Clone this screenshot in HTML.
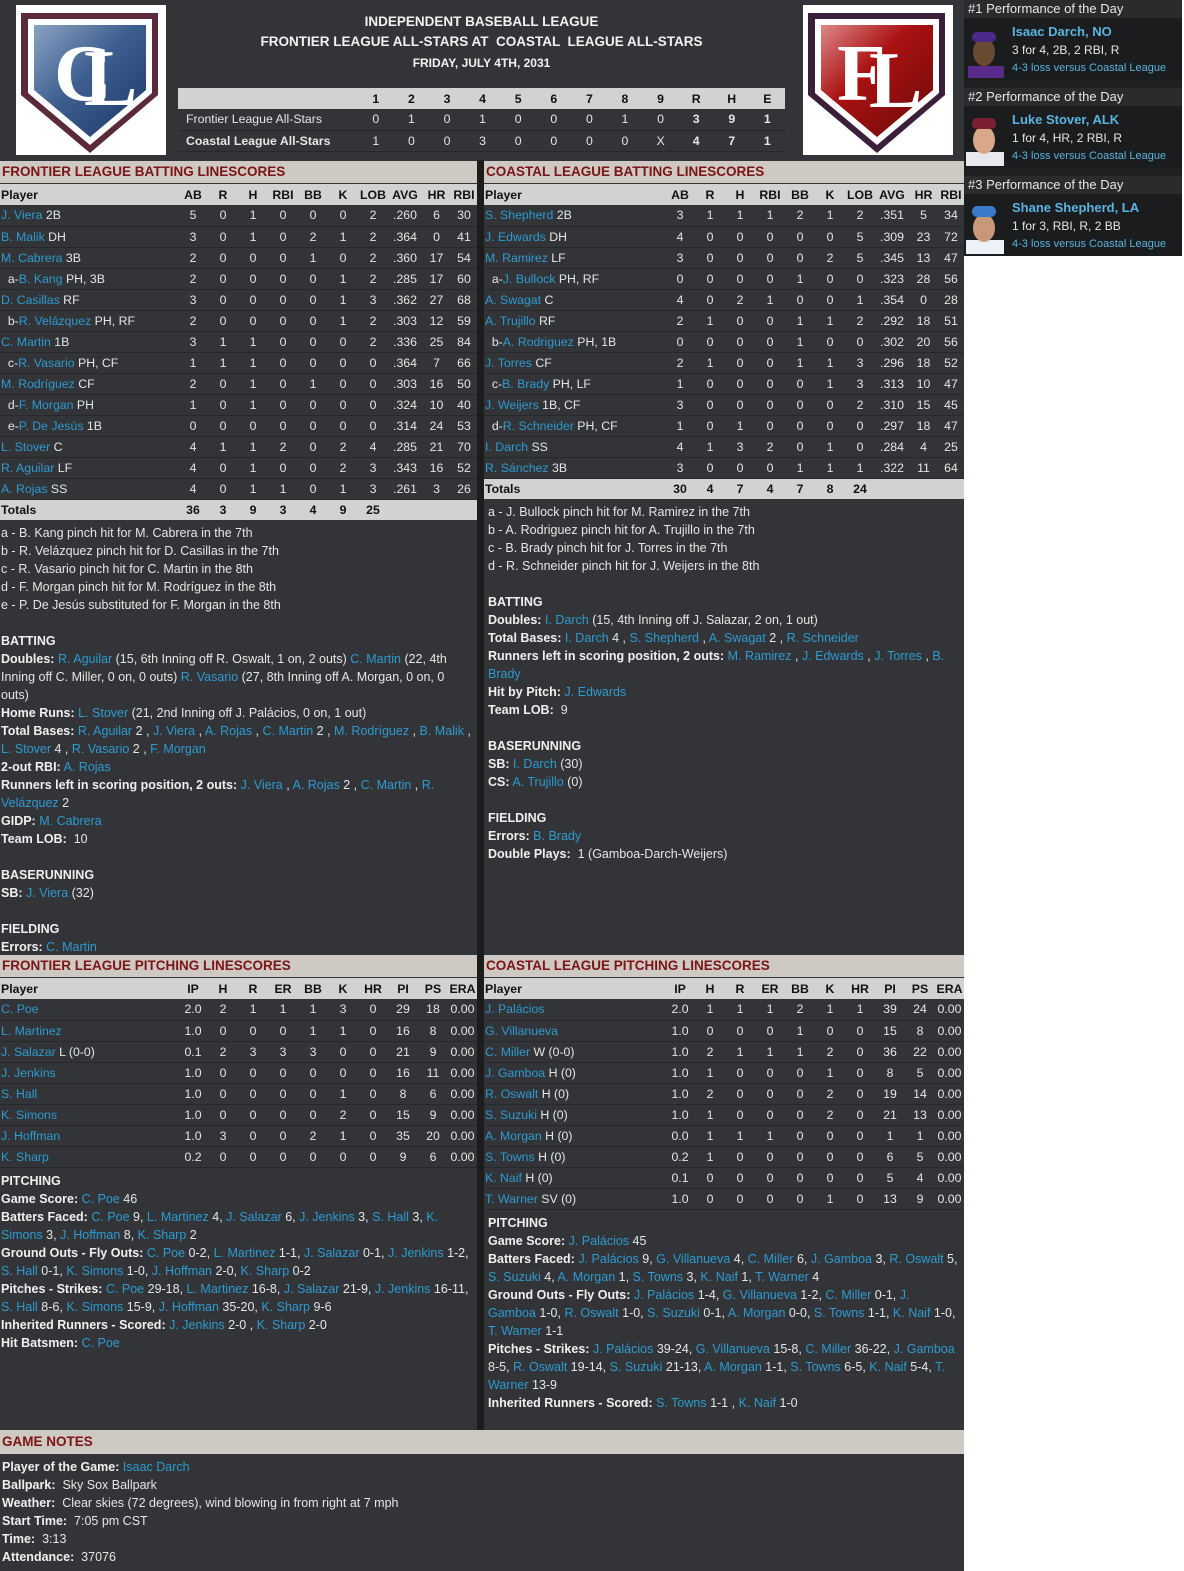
<!DOCTYPE html>
<html><head><meta charset="utf-8"><style>
*{margin:0;padding:0;box-sizing:border-box}
body{width:1184px;height:1571px;background:#fff;font-family:"Liberation Sans",sans-serif;font-size:12px;color:#e6e6e6;position:relative;overflow:hidden}
.main{position:absolute;left:0;top:0;width:964px;height:1571px;background:#333437}
.sep{position:absolute;left:477px;top:160px;width:7px;height:1270px;background:#1c1c1c}
a,.l{color:#2d9bd0;text-decoration:none}
.sh{position:absolute;height:22px;background:#cfc9c3;color:#7b1414;font-weight:bold;font-size:13.5px;line-height:22px;padding-left:2px}
table{border-collapse:collapse;table-layout:fixed;position:absolute}
td,th{height:21px;padding:0;text-align:center;white-space:nowrap;overflow:hidden;font-size:12.3px}
th{background:#d2d2d2;color:#111;font-weight:bold}
td{border-bottom:1px solid #27282a}
td:first-child,th:first-child{text-align:left;padding-left:1px}
tr.tot td{background:#d2d2d2;color:#111;font-weight:bold;border:none}
.notes{position:absolute;line-height:18px;font-size:12.5px}
.notes b{color:#f0f0f0}
.side{position:absolute;left:964px;top:0;width:218px;height:254px;background:#1f2022}
.pt{height:18px;line-height:18px;background:#2a2b2d;color:#e8e8e8;font-size:13px;padding-left:4px}
.card{height:62px;position:relative;background:#1b1c1e}
.card .face{position:absolute;left:0;top:4px;width:40px;height:56px}
.card .t{position:absolute;left:48px;top:5px;line-height:18px}
.card .n{color:#5ab4e0;font-weight:bold;font-size:13px}
.card .s{font-size:11px;color:#5ab4e0}
</style></head><body>
<div class="main"></div>

<div style="position:absolute;left:16px;top:5px;width:150px;height:150px;background:#fff">
<svg width="150" height="150" viewBox="0 0 150 150"><defs><linearGradient id="gb" x1="0" y1="0" x2="1" y2="1"><stop offset="0" stop-color="#8aa3c2"/><stop offset="0.45" stop-color="#3d5f8f"/><stop offset="1" stop-color="#1c3766"/></linearGradient></defs>
<polygon points="5,8 142,8 142,90 74,148 5,90" fill="#5a2a3a"/><polygon points="12,14 136,14 136,88 74,140 12,88" fill="#fff"/><polygon points="18,20 130,20 130,85 74,132 18,85" fill="url(#gb)"/>
<text x="38" y="95" font-family="Liberation Serif,serif" font-size="80" font-weight="bold" fill="#fff">C</text><text x="68" y="100" font-family="Liberation Serif,serif" font-size="80" font-weight="bold" fill="#fff">L</text></svg></div>
<div style="position:absolute;left:803px;top:5px;width:150px;height:150px;background:#fff">
<svg width="150" height="150" viewBox="0 0 150 150"><defs><linearGradient id="gr" x1="0" y1="0" x2="1" y2="1"><stop offset="0" stop-color="#d88"/><stop offset="0.4" stop-color="#a11"/><stop offset="1" stop-color="#6b0a0a"/></linearGradient></defs>
<polygon points="5,8 142,8 142,90 74,148 5,90" fill="#3a1f3a"/><polygon points="12,14 136,14 136,88 74,140 12,88" fill="#fff"/><polygon points="18,20 130,20 130,85 74,132 18,85" fill="url(#gr)"/>
<text x="34" y="95" font-family="Liberation Serif,serif" font-size="80" font-weight="bold" fill="#fff">F</text><text x="66" y="102" font-family="Liberation Serif,serif" font-size="80" font-weight="bold" fill="#fff">L</text></svg></div>

<div style="position:absolute;left:178px;width:607px;top:12px;text-align:center;font-weight:bold;color:#f2f2f2">
<div style="font-size:13.5px;line-height:20px">INDEPENDENT BASEBALL LEAGUE</div>
<div style="font-size:13.5px;line-height:20px">FRONTIER LEAGUE ALL-STARS AT &nbsp;COASTAL &nbsp;LEAGUE ALL-STARS</div>
<div style="font-size:12px;line-height:22px">FRIDAY, JULY 4TH, 2031</div></div>

<table style="left:178px;top:88px;width:607px">
<colgroup><col style="width:180px"><col span="12" style="width:35.6px"></colgroup>
<tr><th></th><th>1</th><th>2</th><th>3</th><th>4</th><th>5</th><th>6</th><th>7</th><th>8</th><th>9</th><th>R</th><th>H</th><th>E</th></tr>
<tr><td style="padding-left:8px">Frontier League All-Stars</td><td>0</td><td>1</td><td>0</td><td>1</td><td>0</td><td>0</td><td>0</td><td>1</td><td>0</td><td><b>3</b></td><td><b>9</b></td><td><b>1</b></td></tr>
<tr><td style="padding-left:8px;font-weight:bold">Coastal League All-Stars</td><td>1</td><td>0</td><td>0</td><td>3</td><td>0</td><td>0</td><td>0</td><td>0</td><td>X</td><td><b>4</b></td><td><b>7</b></td><td><b>1</b></td></tr>
</table>

<div class="side">
<div class="pt">#1 Performance of the Day</div>
<div class="card"><svg class="face" viewBox="0 0 40 56"><rect x="4" y="44" width="36" height="12" fill="#5a2a8a"/><ellipse cx="20" cy="30" rx="11" ry="14" fill="#6b4a33"/><rect x="8" y="10" width="24" height="10" rx="5" fill="#4b2a8a"/></svg><div class="t"><div class="n">Isaac Darch, NO</div><div>3 for 4, 2B, 2 RBI, R</div><div class="s">4-3 loss versus Coastal League</div></div></div>
<div style="height:8px"></div>
<div class="pt">#2 Performance of the Day</div>
<div class="card"><svg class="face" viewBox="0 0 40 56"><rect x="2" y="42" width="38" height="14" fill="#e8e8ee"/><ellipse cx="20" cy="30" rx="11" ry="14" fill="#d8a888"/><rect x="8" y="8" width="24" height="11" rx="5" fill="#7a2030"/></svg><div class="t"><div class="n">Luke Stover, ALK</div><div>1 for 4, HR, 2 RBI, R</div><div class="s">4-3 loss versus Coastal League</div></div></div>
<div style="height:8px"></div>
<div class="pt">#3 Performance of the Day</div>
<div class="card"><svg class="face" viewBox="0 0 40 56"><rect x="2" y="42" width="38" height="14" fill="#eef2f8"/><ellipse cx="20" cy="30" rx="11" ry="14" fill="#c89878"/><rect x="8" y="8" width="24" height="11" rx="5" fill="#3a7ac8"/></svg><div class="t"><div class="n">Shane Shepherd, LA</div><div>1 for 3, RBI, R, 2 BB</div><div class="s">4-3 loss versus Coastal League</div></div></div>
</div>

<div class="sep"></div>

<div class="sh" style="left:0;top:161px;width:477px">FRONTIER LEAGUE BATTING LINESCORES</div>
<table style="left:0;top:184px;width:477px">
<colgroup><col style="width:178px"><col span="7" style="width:30px"><col style="width:34px"><col style="width:29px"><col style="width:26px"></colgroup>
<tr><th>Player</th><th>AB</th><th>R</th><th>H</th><th>RBI</th><th>BB</th><th>K</th><th>LOB</th><th>AVG</th><th>HR</th><th>RBI</th></tr>
<tr><td><a>J. Viera</a> 2B</td><td>5</td><td>0</td><td>1</td><td>0</td><td>0</td><td>0</td><td>2</td><td>.260</td><td>6</td><td>30</td></tr>
<tr><td><a>B. Malik</a> DH</td><td>3</td><td>0</td><td>1</td><td>0</td><td>2</td><td>1</td><td>2</td><td>.364</td><td>0</td><td>41</td></tr>
<tr><td><a>M. Cabrera</a> 3B</td><td>2</td><td>0</td><td>0</td><td>0</td><td>1</td><td>0</td><td>2</td><td>.360</td><td>17</td><td>54</td></tr>
<tr><td>&nbsp;&nbsp;a-<a>B. Kang</a> PH, 3B</td><td>2</td><td>0</td><td>0</td><td>0</td><td>0</td><td>1</td><td>2</td><td>.285</td><td>17</td><td>60</td></tr>
<tr><td><a>D. Casillas</a> RF</td><td>3</td><td>0</td><td>0</td><td>0</td><td>0</td><td>1</td><td>3</td><td>.362</td><td>27</td><td>68</td></tr>
<tr><td>&nbsp;&nbsp;b-<a>R. Velázquez</a> PH, RF</td><td>2</td><td>0</td><td>0</td><td>0</td><td>0</td><td>1</td><td>2</td><td>.303</td><td>12</td><td>59</td></tr>
<tr><td><a>C. Martin</a> 1B</td><td>3</td><td>1</td><td>1</td><td>0</td><td>0</td><td>0</td><td>2</td><td>.336</td><td>25</td><td>84</td></tr>
<tr><td>&nbsp;&nbsp;c-<a>R. Vasario</a> PH, CF</td><td>1</td><td>1</td><td>1</td><td>0</td><td>0</td><td>0</td><td>0</td><td>.364</td><td>7</td><td>66</td></tr>
<tr><td><a>M. Rodríguez</a> CF</td><td>2</td><td>0</td><td>1</td><td>0</td><td>1</td><td>0</td><td>0</td><td>.303</td><td>16</td><td>50</td></tr>
<tr><td>&nbsp;&nbsp;d-<a>F. Morgan</a> PH</td><td>1</td><td>0</td><td>1</td><td>0</td><td>0</td><td>0</td><td>0</td><td>.324</td><td>10</td><td>40</td></tr>
<tr><td>&nbsp;&nbsp;e-<a>P. De Jesús</a> 1B</td><td>0</td><td>0</td><td>0</td><td>0</td><td>0</td><td>0</td><td>0</td><td>.314</td><td>24</td><td>53</td></tr>
<tr><td><a>L. Stover</a> C</td><td>4</td><td>1</td><td>1</td><td>2</td><td>0</td><td>2</td><td>4</td><td>.285</td><td>21</td><td>70</td></tr>
<tr><td><a>R. Aguilar</a> LF</td><td>4</td><td>0</td><td>1</td><td>0</td><td>0</td><td>2</td><td>3</td><td>.343</td><td>16</td><td>52</td></tr>
<tr><td><a>A. Rojas</a> SS</td><td>4</td><td>0</td><td>1</td><td>1</td><td>0</td><td>1</td><td>3</td><td>.261</td><td>3</td><td>26</td></tr>
<tr class="tot"><td>Totals</td><td>36</td><td>3</td><td>9</td><td>3</td><td>4</td><td>9</td><td>25</td><td></td><td></td><td></td></tr>
</table>
<div class="notes" style="left:1px;top:524px;width:470px">
a - B. Kang pinch hit for M. Cabrera in the 7th<br>b - R. Velázquez pinch hit for D. Casillas in the 7th<br>c - R. Vasario pinch hit for C. Martin in the 8th<br>d - F. Morgan pinch hit for M. Rodríguez in the 8th<br>e - P. De Jesús substituted for F. Morgan in the 8th<br><br>
<b>BATTING</b><br>
<b>Doubles:</b> <a>R. Aguilar</a> (15, 6th Inning off R. Oswalt, 1 on, 2 outs) <a>C. Martin</a> (22, 4th Inning off C. Miller, 0 on, 0 outs) <a>R. Vasario</a> (27, 8th Inning off A. Morgan, 0 on, 0 outs)<br>
<b>Home Runs:</b> <a>L. Stover</a> (21, 2nd Inning off J. Palácios, 0 on, 1 out)<br>
<b>Total Bases:</b> <a>R. Aguilar</a> 2 , <a>J. Viera</a> , <a>A. Rojas</a> , <a>C. Martin</a> 2 , <a>M. Rodríguez</a> , <a>B. Malik</a> , <a>L. Stover</a> 4 , <a>R. Vasario</a> 2 , <a>F. Morgan</a><br>
<b>2-out RBI:</b> <a>A. Rojas</a><br>
<b>Runners left in scoring position, 2 outs:</b> <a>J. Viera</a> , <a>A. Rojas</a> 2 , <a>C. Martin</a> , <a>R. Velázquez</a> 2<br>
<b>GIDP:</b> <a>M. Cabrera</a><br>
<b>Team LOB:</b>&nbsp; 10<br><br>
<b>BASERUNNING</b><br>
<b>SB:</b> <a>J. Viera</a> (32)<br><br>
<b>FIELDING</b><br>
<b>Errors:</b> <a>C. Martin</a>
</div>

<div class="sh" style="left:484px;top:161px;width:480px">COASTAL LEAGUE BATTING LINESCORES</div>
<table style="left:484px;top:184px;width:480px">
<colgroup><col style="width:181px"><col span="7" style="width:30px"><col style="width:34px"><col style="width:29px"><col style="width:26px"></colgroup>
<tr><th>Player</th><th>AB</th><th>R</th><th>H</th><th>RBI</th><th>BB</th><th>K</th><th>LOB</th><th>AVG</th><th>HR</th><th>RBI</th></tr>
<tr><td><a>S. Shepherd</a> 2B</td><td>3</td><td>1</td><td>1</td><td>1</td><td>2</td><td>1</td><td>2</td><td>.351</td><td>5</td><td>34</td></tr>
<tr><td><a>J. Edwards</a> DH</td><td>4</td><td>0</td><td>0</td><td>0</td><td>0</td><td>0</td><td>5</td><td>.309</td><td>23</td><td>72</td></tr>
<tr><td><a>M. Ramirez</a> LF</td><td>3</td><td>0</td><td>0</td><td>0</td><td>0</td><td>2</td><td>5</td><td>.345</td><td>13</td><td>47</td></tr>
<tr><td>&nbsp;&nbsp;a-<a>J. Bullock</a> PH, RF</td><td>0</td><td>0</td><td>0</td><td>0</td><td>1</td><td>0</td><td>0</td><td>.323</td><td>28</td><td>56</td></tr>
<tr><td><a>A. Swagat</a> C</td><td>4</td><td>0</td><td>2</td><td>1</td><td>0</td><td>0</td><td>1</td><td>.354</td><td>0</td><td>28</td></tr>
<tr><td><a>A. Trujillo</a> RF</td><td>2</td><td>1</td><td>0</td><td>0</td><td>1</td><td>1</td><td>2</td><td>.292</td><td>18</td><td>51</td></tr>
<tr><td>&nbsp;&nbsp;b-<a>A. Rodriguez</a> PH, 1B</td><td>0</td><td>0</td><td>0</td><td>0</td><td>1</td><td>0</td><td>0</td><td>.302</td><td>20</td><td>56</td></tr>
<tr><td><a>J. Torres</a> CF</td><td>2</td><td>1</td><td>0</td><td>0</td><td>1</td><td>1</td><td>3</td><td>.296</td><td>18</td><td>52</td></tr>
<tr><td>&nbsp;&nbsp;c-<a>B. Brady</a> PH, LF</td><td>1</td><td>0</td><td>0</td><td>0</td><td>0</td><td>1</td><td>3</td><td>.313</td><td>10</td><td>47</td></tr>
<tr><td><a>J. Weijers</a> 1B, CF</td><td>3</td><td>0</td><td>0</td><td>0</td><td>0</td><td>0</td><td>2</td><td>.310</td><td>15</td><td>45</td></tr>
<tr><td>&nbsp;&nbsp;d-<a>R. Schneider</a> PH, CF</td><td>1</td><td>0</td><td>1</td><td>0</td><td>0</td><td>0</td><td>0</td><td>.297</td><td>18</td><td>47</td></tr>
<tr><td><a>I. Darch</a> SS</td><td>4</td><td>1</td><td>3</td><td>2</td><td>0</td><td>1</td><td>0</td><td>.284</td><td>4</td><td>25</td></tr>
<tr><td><a>R. Sánchez</a> 3B</td><td>3</td><td>0</td><td>0</td><td>0</td><td>1</td><td>1</td><td>1</td><td>.322</td><td>11</td><td>64</td></tr>
<tr class="tot"><td>Totals</td><td>30</td><td>4</td><td>7</td><td>4</td><td>7</td><td>8</td><td>24</td><td></td><td></td><td></td></tr>
</table>
<div class="notes" style="left:488px;top:503px;width:470px">
a - J. Bullock pinch hit for M. Ramirez in the 7th<br>b - A. Rodriguez pinch hit for A. Trujillo in the 7th<br>c - B. Brady pinch hit for J. Torres in the 7th<br>d - R. Schneider pinch hit for J. Weijers in the 8th<br><br>
<b>BATTING</b><br>
<b>Doubles:</b> <a>I. Darch</a> (15, 4th Inning off J. Salazar, 2 on, 1 out)<br>
<b>Total Bases:</b> <a>I. Darch</a> 4 , <a>S. Shepherd</a> , <a>A. Swagat</a> 2 , <a>R. Schneider</a><br>
<b>Runners left in scoring position, 2 outs:</b> <a>M. Ramirez</a> , <a>J. Edwards</a> , <a>J. Torres</a> , <a>B. Brady</a><br>
<b>Hit by Pitch:</b> <a>J. Edwards</a><br>
<b>Team LOB:</b>&nbsp; 9<br><br>
<b>BASERUNNING</b><br>
<b>SB:</b> <a>I. Darch</a> (30)<br>
<b>CS:</b> <a>A. Trujillo</a> (0)<br><br>
<b>FIELDING</b><br>
<b>Errors:</b> <a>B. Brady</a><br>
<b>Double Plays:</b>&nbsp; 1 (Gamboa-Darch-Weijers)
</div>

<div class="sh" style="left:0;top:955px;width:477px">FRONTIER LEAGUE PITCHING LINESCORES</div>
<table style="left:0;top:978px;width:477px">
<colgroup><col style="width:178px"><col span="9" style="width:30px"><col style="width:29px"></colgroup>
<tr><th>Player</th><th>IP</th><th>H</th><th>R</th><th>ER</th><th>BB</th><th>K</th><th>HR</th><th>PI</th><th>PS</th><th>ERA</th></tr>
<tr><td><a>C. Poe</a></td><td>2.0</td><td>2</td><td>1</td><td>1</td><td>1</td><td>3</td><td>0</td><td>29</td><td>18</td><td>0.00</td></tr>
<tr><td><a>L. Martinez</a></td><td>1.0</td><td>0</td><td>0</td><td>0</td><td>1</td><td>1</td><td>0</td><td>16</td><td>8</td><td>0.00</td></tr>
<tr><td><a>J. Salazar</a> L (0-0)</td><td>0.1</td><td>2</td><td>3</td><td>3</td><td>3</td><td>0</td><td>0</td><td>21</td><td>9</td><td>0.00</td></tr>
<tr><td><a>J. Jenkins</a></td><td>1.0</td><td>0</td><td>0</td><td>0</td><td>0</td><td>0</td><td>0</td><td>16</td><td>11</td><td>0.00</td></tr>
<tr><td><a>S. Hall</a></td><td>1.0</td><td>0</td><td>0</td><td>0</td><td>0</td><td>1</td><td>0</td><td>8</td><td>6</td><td>0.00</td></tr>
<tr><td><a>K. Simons</a></td><td>1.0</td><td>0</td><td>0</td><td>0</td><td>0</td><td>2</td><td>0</td><td>15</td><td>9</td><td>0.00</td></tr>
<tr><td><a>J. Hoffman</a></td><td>1.0</td><td>3</td><td>0</td><td>0</td><td>2</td><td>1</td><td>0</td><td>35</td><td>20</td><td>0.00</td></tr>
<tr><td><a>K. Sharp</a></td><td>0.2</td><td>0</td><td>0</td><td>0</td><td>0</td><td>0</td><td>0</td><td>9</td><td>6</td><td>0.00</td></tr>
</table>
<div class="notes" style="left:1px;top:1172px;width:470px">
<b>PITCHING</b><br>
<b>Game Score:</b> <a>C. Poe</a> 46<br>
<b>Batters Faced:</b> <a>C. Poe</a> 9, <a>L. Martinez</a> 4, <a>J. Salazar</a> 6, <a>J. Jenkins</a> 3, <a>S. Hall</a> 3, <a>K. Simons</a> 3, <a>J. Hoffman</a> 8, <a>K. Sharp</a> 2<br>
<b>Ground Outs - Fly Outs:</b> <a>C. Poe</a> 0-2, <a>L. Martinez</a> 1-1, <a>J. Salazar</a> 0-1, <a>J. Jenkins</a> 1-2, <a>S. Hall</a> 0-1, <a>K. Simons</a> 1-0, <a>J. Hoffman</a> 2-0, <a>K. Sharp</a> 0-2<br>
<b>Pitches - Strikes:</b> <a>C. Poe</a> 29-18, <a>L. Martinez</a> 16-8, <a>J. Salazar</a> 21-9, <a>J. Jenkins</a> 16-11, <a>S. Hall</a> 8-6, <a>K. Simons</a> 15-9, <a>J. Hoffman</a> 35-20, <a>K. Sharp</a> 9-6<br>
<b>Inherited Runners - Scored:</b> <a>J. Jenkins</a> 2-0 , <a>K. Sharp</a> 2-0<br>
<b>Hit Batsmen:</b> <a>C. Poe</a>
</div>

<div class="sh" style="left:484px;top:955px;width:480px">COASTAL LEAGUE PITCHING LINESCORES</div>
<table style="left:484px;top:978px;width:480px">
<colgroup><col style="width:181px"><col span="9" style="width:30px"><col style="width:29px"></colgroup>
<tr><th>Player</th><th>IP</th><th>H</th><th>R</th><th>ER</th><th>BB</th><th>K</th><th>HR</th><th>PI</th><th>PS</th><th>ERA</th></tr>
<tr><td><a>J. Palácios</a></td><td>2.0</td><td>1</td><td>1</td><td>1</td><td>2</td><td>1</td><td>1</td><td>39</td><td>24</td><td>0.00</td></tr>
<tr><td><a>G. Villanueva</a></td><td>1.0</td><td>0</td><td>0</td><td>0</td><td>1</td><td>0</td><td>0</td><td>15</td><td>8</td><td>0.00</td></tr>
<tr><td><a>C. Miller</a> W (0-0)</td><td>1.0</td><td>2</td><td>1</td><td>1</td><td>1</td><td>2</td><td>0</td><td>36</td><td>22</td><td>0.00</td></tr>
<tr><td><a>J. Gamboa</a> H (0)</td><td>1.0</td><td>1</td><td>0</td><td>0</td><td>0</td><td>1</td><td>0</td><td>8</td><td>5</td><td>0.00</td></tr>
<tr><td><a>R. Oswalt</a> H (0)</td><td>1.0</td><td>2</td><td>0</td><td>0</td><td>0</td><td>2</td><td>0</td><td>19</td><td>14</td><td>0.00</td></tr>
<tr><td><a>S. Suzuki</a> H (0)</td><td>1.0</td><td>1</td><td>0</td><td>0</td><td>0</td><td>2</td><td>0</td><td>21</td><td>13</td><td>0.00</td></tr>
<tr><td><a>A. Morgan</a> H (0)</td><td>0.0</td><td>1</td><td>1</td><td>1</td><td>0</td><td>0</td><td>0</td><td>1</td><td>1</td><td>0.00</td></tr>
<tr><td><a>S. Towns</a> H (0)</td><td>0.2</td><td>1</td><td>0</td><td>0</td><td>0</td><td>0</td><td>0</td><td>6</td><td>5</td><td>0.00</td></tr>
<tr><td><a>K. Naif</a> H (0)</td><td>0.1</td><td>0</td><td>0</td><td>0</td><td>0</td><td>0</td><td>0</td><td>5</td><td>4</td><td>0.00</td></tr>
<tr><td><a>T. Warner</a> SV (0)</td><td>1.0</td><td>0</td><td>0</td><td>0</td><td>0</td><td>1</td><td>0</td><td>13</td><td>9</td><td>0.00</td></tr>
</table>
<div class="notes" style="left:488px;top:1214px;width:470px">
<b>PITCHING</b><br>
<b>Game Score:</b> <a>J. Palácios</a> 45<br>
<b>Batters Faced:</b> <a>J. Palácios</a> 9, <a>G. Villanueva</a> 4, <a>C. Miller</a> 6, <a>J. Gamboa</a> 3, <a>R. Oswalt</a> 5, <a>S. Suzuki</a> 4, <a>A. Morgan</a> 1, <a>S. Towns</a> 3, <a>K. Naif</a> 1, <a>T. Warner</a> 4<br>
<b>Ground Outs - Fly Outs:</b> <a>J. Palácios</a> 1-4, <a>G. Villanueva</a> 1-2, <a>C. Miller</a> 0-1, <a>J. Gamboa</a> 1-0, <a>R. Oswalt</a> 1-0, <a>S. Suzuki</a> 0-1, <a>A. Morgan</a> 0-0, <a>S. Towns</a> 1-1, <a>K. Naif</a> 1-0, <a>T. Warner</a> 1-1<br>
<b>Pitches - Strikes:</b> <a>J. Palácios</a> 39-24, <a>G. Villanueva</a> 15-8, <a>C. Miller</a> 36-22, <a>J. Gamboa</a> 8-5, <a>R. Oswalt</a> 19-14, <a>S. Suzuki</a> 21-13, <a>A. Morgan</a> 1-1, <a>S. Towns</a> 6-5, <a>K. Naif</a> 5-4, <a>T. Warner</a> 13-9<br>
<b>Inherited Runners - Scored:</b> <a>S. Towns</a> 1-1 , <a>K. Naif</a> 1-0
</div>

<div class="sh" style="left:0;top:1430px;width:964px;height:24px;line-height:24px">GAME NOTES</div>
<div class="notes" style="left:2px;top:1458px;width:900px">
<b>Player of the Game:</b> <a>Isaac Darch</a><br>
<b>Ballpark:</b>&nbsp; Sky Sox Ballpark<br>
<b>Weather:</b>&nbsp; Clear skies (72 degrees), wind blowing in from right at 7 mph<br>
<b>Start Time:</b>&nbsp; 7:05 pm CST<br>
<b>Time:</b>&nbsp; 3:13<br>
<b>Attendance:</b>&nbsp; 37076
</div>
</body></html>
